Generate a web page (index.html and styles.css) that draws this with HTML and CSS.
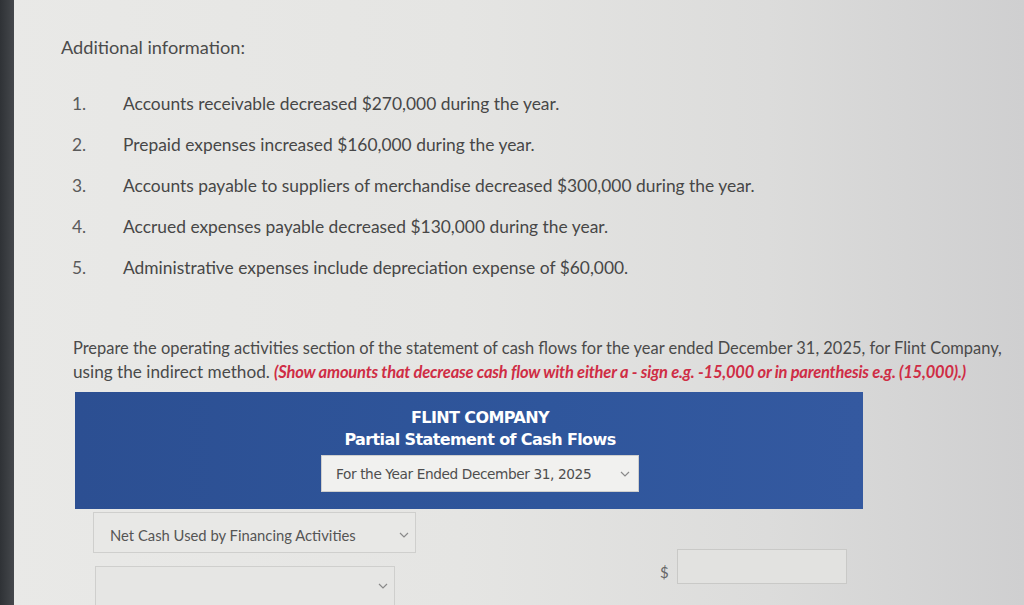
FILE: index.html
```html
<!DOCTYPE html>
<html>
<head>
<meta charset="utf-8">
<link rel="stylesheet" href="styles.css">
</head>
<body>
<div class="screen">
  <div class="bezel"></div>
  <main class="page">
    <h2 class="heading">Additional information:</h2>
    <ol class="info">
      <li><span class="num">1.</span><span class="txt">Accounts receivable decreased $270,000 during the year.</span></li>
      <li><span class="num">2.</span><span class="txt">Prepaid expenses increased $160,000 during the year.</span></li>
      <li><span class="num">3.</span><span class="txt">Accounts payable to suppliers of merchandise decreased $300,000 during the year.</span></li>
      <li><span class="num">4.</span><span class="txt">Accrued expenses payable decreased $130,000 during the year.</span></li>
      <li><span class="num">5.</span><span class="txt">Administrative expenses include depreciation expense of $60,000.</span></li>
    </ol>
    <p class="prompt">Prepare the operating activities section of the statement of cash flows for the year ended December 31, 2025, for Flint Company,<br><span class="line2txt">using the indirect method.</span> <em class="note">(Show amounts that decrease cash flow with either a - sign e.g. -15,000 or in parenthesis e.g. (15,000).)</em></p>

    <section class="statement">
      <div class="stmt-title">FLINT COMPANY</div>
      <div class="stmt-sub">Partial Statement of Cash Flows</div>
      <div class="select period">
        <span>For the Year Ended December 31, 2025</span>
        <svg class="chev" width="10" height="6" viewBox="0 0 10 6"><path d="M1 1l4 4 4-4" fill="none" stroke="#8a8a8a" stroke-width="1.2"/></svg>
      </div>
    </section>

    <div class="row row1">
      <div class="select line1">
        <span>Net Cash Used by Financing Activities</span>
        <svg class="chev" width="10" height="6" viewBox="0 0 10 6"><path d="M1 1l4 4 4-4" fill="none" stroke="#8a8a8a" stroke-width="1.2"/></svg>
      </div>
    </div>
    <div class="row row2">
      <div class="select line2">
        <span></span>
        <svg class="chev" width="10" height="6" viewBox="0 0 10 6"><path d="M1 1l4 4 4-4" fill="none" stroke="#8a8a8a" stroke-width="1.2"/></svg>
      </div>
      <div class="amount">
        <span class="dollar">$</span>
        <div class="input"></div>
      </div>
    </div>
  </main>
</div>
</body>
</html>
```
FILE: styles.css
```css
html, body {
  margin: 0;
  padding: 0;
  height: 100%;
  overflow: hidden;
}
body {
  font-family: Lato, "Liberation Sans", sans-serif;
  color: #4a4a4a;
}
.screen {
  display: flex;
  width: 1024px;
  height: 605px;
  background: linear-gradient(90deg, #e9e9e7 0%, #e5e5e3 45%, #dcdcdb 75%, #cfcfd0 100%);
}
.bezel {
  width: 14px;
  flex: none;
  background: linear-gradient(90deg, #2f3236, #45484c);
}
.page {
  flex: 1;
  padding-left: 47px;
  padding-top: 37px;
}
.heading {
  margin: 0;
  font-weight: 400;
  font-size: 18.2px;
  line-height: 20px;
  color: #4b4b4b;
}
.info {
  list-style: none;
  margin: 37px 0 0 0;
  padding: 0 0 0 11px;
  display: flex;
  flex-direction: column;
  gap: 21px;
}
.info li {
  display: flex;
  font-size: 17.4px;
  line-height: 20px;
}
.num {
  width: 51px;
  color: #5a5a5a;
}
.txt {
  color: #474747;
}
.prompt {
  margin: 59px 0 0 12px;
  font-size: 16.45px;
  line-height: 23px;
  color: #4a4a4a;
  white-space: nowrap;
}
.line2txt {
  font-size: 17.2px;
}
.note {
  font-style: italic;
  font-weight: 700;
  color: #cf2d45;
  letter-spacing: -0.2px;
  font-size: 16.5px;
}
.statement {
  margin: 8px 0 0 14px;
  width: 766px;
  height: 94px;
  padding: 15px 0 8px 22px;
  background: linear-gradient(90deg, #2c4f92 0%, #2f569c 60%, #3459a0 100%);
  display: flex;
  flex-direction: column;
  align-items: center;
  color: #ffffff;
  font-family: "DejaVu Sans", Verdana, sans-serif;
  font-weight: 700;
}
.stmt-title {
  font-size: 16px;
  line-height: 22px;
  letter-spacing: -0.6px;
}
.stmt-sub {
  font-size: 16px;
  line-height: 22px;
  letter-spacing: -0.6px;
}
.select {
  display: flex;
  align-items: center;
  justify-content: space-between;
  box-sizing: border-box;
  background: #ececea;
  border: 1px solid #cfcfcd;
  color: #555;
  font-weight: 400;
}
.period {
  margin-top: 4px;
  width: 318px;
  height: 37px;
  padding: 0 8px 0 14px;
  background: #f1f1ef;
  font-family: "DejaVu Sans", Verdana, sans-serif;
  font-size: 13.7px;
  letter-spacing: -0.4px;
  color: #4e4e4e;
}
.row {
  display: flex;
  align-items: flex-start;
}
.row1 {
  margin: 3px 0 0 32px;
}
.line1 {
  width: 323px;
  height: 41px;
  padding: 4px 6px 0 16px;
  font-size: 14.8px;
  background: #e8e8e6;
  color: #555;
}
.row2 {
  margin: 13px 0 0 34px;
}
.line2 {
  width: 300px;
  height: 40px;
  padding: 0 6px 0 16px;
  background: #e6e6e4;
}
.amount {
  margin-left: 265px;
  margin-top: -17px;
  display: flex;
  align-items: flex-end;
  gap: 8px;
}
.dollar {
  font-size: 15px;
  line-height: 20px;
  color: #666;
  padding-bottom: 2px;
}
.input {
  width: 170px;
  height: 35px;
  box-sizing: border-box;
  border: 1px solid #c9c9c7;
  background: #e2e2e0;
}
```
